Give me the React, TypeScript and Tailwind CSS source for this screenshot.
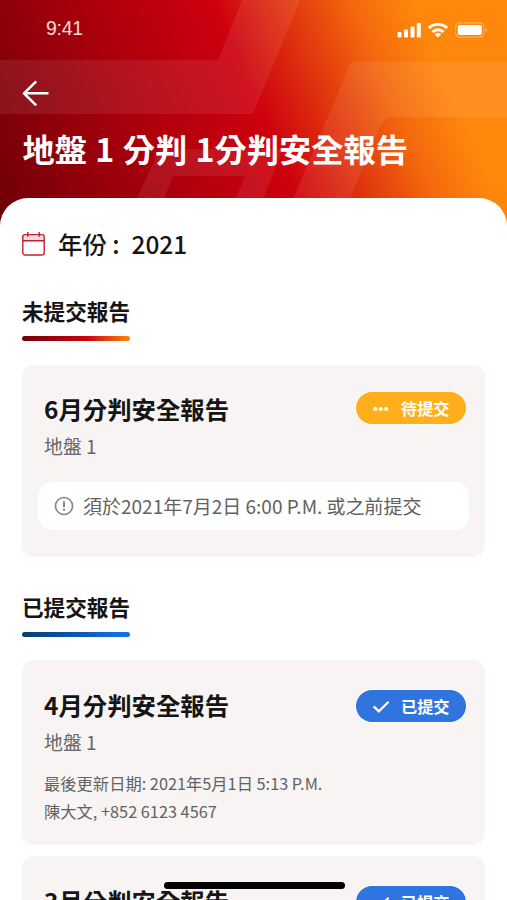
import React from 'react';

interface StatusBadgeProps {
  status: 'pending' | 'submitted';
}

interface Report {
  id: number;
  title: string;
  site: string;
  updatedAt: string;
  contact: string;
}

const submittedReports: Report[] = [
  {
    id: 4,
    title: '4月分判安全報告',
    site: '地盤 1',
    updatedAt: '最後更新日期: 2021年5月1日 5:13 P.M.',
    contact: '陳大文, +852 6123 4567'
  },
  {
    id: 3,
    title: '3月分判安全報告',
    site: '地盤 1',
    updatedAt: '最後更新日期: 2021年4月1日 5:13 P.M.',
    contact: '陳大文, +852 6123 4567'
  }
];

const HeaderPattern = () => (
  <svg className="absolute inset-0 h-full w-full" viewBox="0 0 507 228" fill="#fff" fillOpacity="0.08">
    <path d="M242 0H300L253 114H0V60H218Z" />
    <path d="M351 62H507V117H393Q384 117 380 126L345 211H288Z" />
    <path d="M160 149H283L258 211H231L245 176H173L159 211H131Z" fillOpacity="0.08" />
  </svg>
);

const StatusBar = () => (
  <div className="relative flex h-[60px] items-start justify-between pl-[46px] pr-[19px]">
    <span className="mt-[14px] font-['Liberation_Sans',sans-serif] text-[19.5px] leading-7 tracking-[-0.3px] text-white/85">9:41</span>
    <div className="mt-[22px] flex items-center text-white">
      <svg width="25" height="16" viewBox="0 0 25 16" fill="currentColor">
        <rect x="0.5" y="10" width="4" height="5.5" rx="1.2" />
        <rect x="7" y="7.5" width="4" height="8" rx="1.2" />
        <rect x="13.5" y="4.5" width="4" height="11" rx="1.2" />
        <rect x="19.8" y="1" width="4" height="14.5" rx="1.2" />
      </svg>
      <svg className="ml-[5px]" width="22" height="16" viewBox="0 0 22 16" fill="none" stroke="currentColor" strokeWidth="2.8">
        <path d="M1.8 6.1a13.2 13.2 0 0 1 18.4 0" />
        <path d="M5.5 10a7.9 7.9 0 0 1 11 0" />
        <path d="M11 15.4 7.7 12.2a4.8 4.8 0 0 1 6.6 0Z" fill="currentColor" stroke="none" />
      </svg>
      <svg className="ml-[6px]" width="33" height="16" viewBox="0 0 33 16" fill="none">
        <rect x="0.6" y="0.9" width="28.4" height="14.2" rx="4" stroke="currentColor" strokeOpacity="0.4" />
        <rect x="2.8" y="3" width="24" height="10" rx="1.8" fill="currentColor" />
        <path d="M30.5 5.5c1.6.7 1.6 4.3 0 5Z" fill="currentColor" fillOpacity="0.4" />
      </svg>
    </div>
  </div>
);

const StatusBadge: React.FC<StatusBadgeProps> = ({ status }) => {
  const isPending = status === 'pending';

  return (
    <span
      className={`flex h-8 w-[110px] flex-shrink-0 items-center pl-4 text-[16.2px] font-bold leading-none text-white ring-1 ring-white/70 rounded-full ${
        isPending ? 'bg-[#ffae1c]' : 'mt-[2px] bg-[#2f74df]'
      }`}
    >
      {isPending ? (
        <svg width="18" height="16" viewBox="0 0 18 16" fill="currentColor">
          <circle cx="3.2" cy="9" r="2.1" />
          <circle cx="8.8" cy="9" r="2.1" />
          <circle cx="14.2" cy="9" r="2.1" />
        </svg>
      ) : (
        <svg width="18" height="16" viewBox="0 0 18 16" fill="none" stroke="currentColor" strokeWidth="2.2">
          <path d="M1.7 8.4 6.8 13.4 16.6 3.8" />
        </svg>
      )}
      <span className="ml-[11px]">{isPending ? '待提交' : '已提交'}</span>
    </span>
  );
};

interface SectionHeadingProps {
  label: string;
  barClassName: string;
}

const SectionHeading: React.FC<SectionHeadingProps> = ({ label, barClassName }) => (
  <div className="w-[108px]">
    <h2 className="whitespace-nowrap text-[21.6px] font-bold leading-8">{label}</h2>
    <div className={`mt-[9px] h-[5px] rounded-full ${barClassName}`} />
  </div>
);

const CardHeader = ({ title, site, status }: { title: string; site: string; status: 'pending' | 'submitted' }) => (
  <>
    <div className="flex h-9 items-start justify-between">
      <h3 className="-mt-px text-[24.4px] font-bold leading-9">{title}</h3>
      <StatusBadge status={status} />
    </div>
    <p className="mt-1 text-[18.9px] leading-7 text-[#666]">{site}</p>
  </>
);

export default function App() {
  return (
    <div className="relative h-[900px] w-[507px] overflow-hidden bg-white font-['Noto_Sans_CJK_TC',sans-serif] text-[#151515]">
      <header className="relative h-[228px] bg-[linear-gradient(67deg,#6d0008_0%,#8b0009_14%,#b2000c_34%,#cd000f_51%,#e23a0e_64%,#f4680d_74%,#ff870c_84%)]">
        <HeaderPattern />
        <StatusBar />
        <button className="relative ml-[22px] mt-5 block text-white" aria-label="返回">
          <svg width="27" height="27" viewBox="0 0 27 27" fill="none" stroke="currentColor" strokeWidth="2.5">
            <path d="M14.2 1.3 2 13.3l12.2 12M2 13.3h24.5" strokeLinejoin="round" />
          </svg>
        </button>
        <h1 className="relative ml-[22.5px] mt-[19px] whitespace-nowrap text-[32.25px] font-bold leading-[44px] text-white [word-spacing:1px]">
          地盤 1 分判 1分判安全報告
        </h1>
      </header>

      <main className="relative -mt-[30px] rounded-t-[28px] bg-white px-[22px] pt-[30px]">
        <div className="flex h-8 items-center">
          <svg width="23" height="24" viewBox="0 0 23 24" fill="none" stroke="#bd2330" strokeWidth="1.4">
            <path d="M.8 3.2h21.4v5.4H.8z" fill="#fbd9db" stroke="none" />
            <rect x="0.8" y="2.6" width="21.4" height="20.4" rx="2.2" />
            <path d="M.8 8.7h21.4M5.8 0v4.8M17.2 0v4.8" />
          </svg>
          <p className="ml-[13px] whitespace-pre text-[24.4px] font-medium leading-8">{'年份 :'}</p>
          <p className="ml-3 text-[24.4px] font-medium leading-8">2021</p>
        </div>

        <section className="mt-[35px]">
          <SectionHeading label="未提交報告" barClassName="bg-[linear-gradient(90deg,#6d0008,#cd0010_60%,#ff870c)]" />
          <div className="mt-6 h-48 rounded-xl bg-[#f7f4f3] px-4 pt-[27px]">
            <div className="pl-[6px] pr-[3px]">
              <CardHeader title="6月分判安全報告" site="地盤 1" status="pending" />
            </div>
            <div className="mt-[22px] flex h-12 items-center rounded-[14px] bg-white pl-4 text-[#626262]">
              <svg width="20" height="20" viewBox="0 0 20 20" fill="none" stroke="#858585" strokeWidth="1.6">
                <circle cx="10" cy="10" r="8.5" />
                <path d="M10 5.3v6M10 12.8v2" strokeWidth="1.9" />
              </svg>
              <span className="ml-[9px] whitespace-nowrap text-[19px] leading-7">須於2021年7月2日 6:00 P.M. 或之前提交</span>
            </div>
          </div>
        </section>

        <section className="mt-[34px]">
          <SectionHeading label="已提交報告" barClassName="bg-[linear-gradient(90deg,#0a3d6b,#0b57b0_50%,#1677e8)]" />
          <div className="mt-[23px] space-y-[11px]">
            {submittedReports.map((report) => (
              <article key={report.id} className="h-[185px] rounded-xl bg-[#f7f4f3] pl-[22px] pr-[19px] pt-[28px]">
                <CardHeader title={report.title} site={report.site} status="submitted" />
                <div className="mt-[13px] text-[16.3px] leading-7 text-[#626262]">
                  <p>{report.updatedAt}</p>
                  <p>{report.contact}</p>
                </div>
              </article>
            ))}
          </div>
        </section>
      </main>

      <div className="absolute left-[164px] top-[882px] h-[7px] w-[181px] rounded-full bg-black" />
    </div>
  );
}
